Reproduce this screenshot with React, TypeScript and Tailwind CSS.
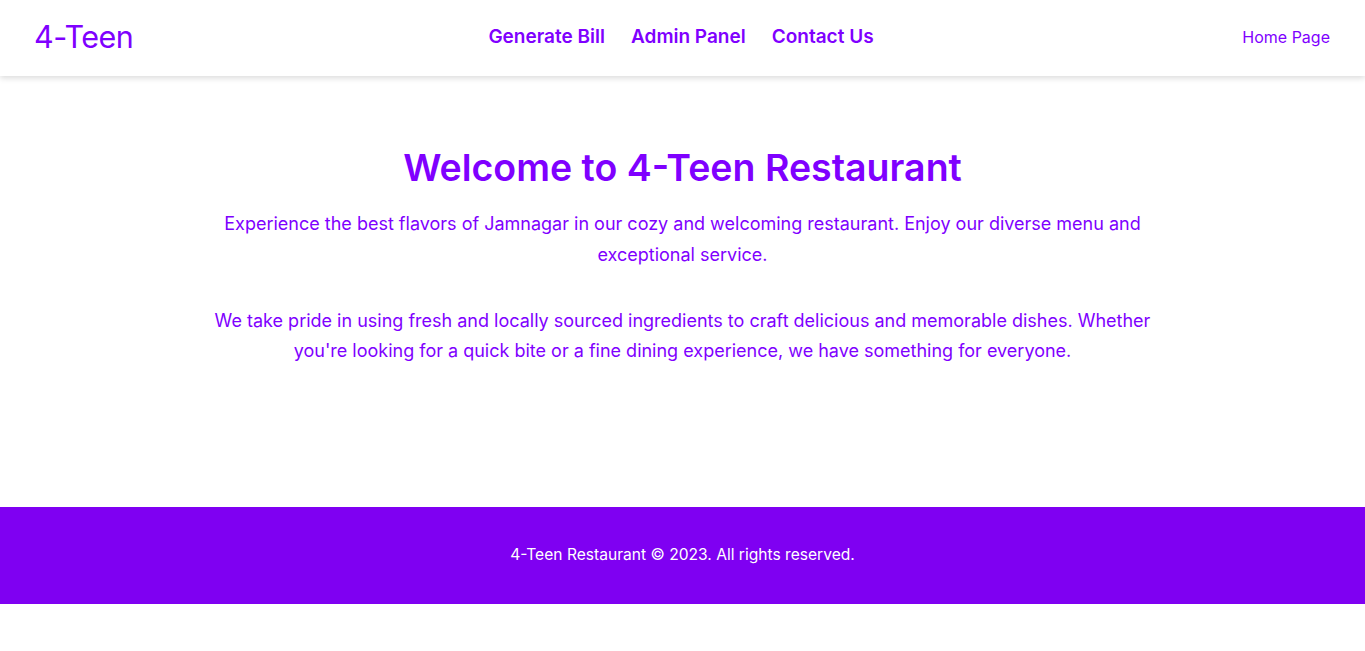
import React from 'react';

const navLinks = ['Generate Bill', 'Admin Panel', 'Contact Us'];

const App = () => {
    return (
        <div className="min-h-screen bg-white text-[#7f00ff]" style={{ fontFamily: 'Inter, "Open Sans", sans-serif' }}>
            {/* Header */}
            <header className="h-[76px] flex items-center justify-between px-[35px] bg-white shadow-[0_2px_6px_rgba(0,0,0,0.15)] relative">
                <div className="text-[30.5px] leading-none tracking-[-0.5px] w-[200px] -mt-[2px] -ml-[1px]">4-Teen</div>
                <nav className="flex items-center gap-[26px] -mt-[1px] ml-[-2px]">
                    {navLinks.map((link, index) => (
                        <a key={index} href="#" className="text-[19px] font-semibold">{link}</a>
                    ))}
                </nav>
                <div className="w-[200px] flex justify-end -mt-[2px]">
                    <a href="#" className="text-[16px]">Home Page</a>
                </div>
            </header>

            {/* Main content */}
            <main className="h-[431px] pt-[68px] text-center">
                <h1 className="text-[37.5px] font-semibold leading-[48px] mb-[16px]">Welcome to 4-Teen Restaurant</h1>
                <div className="max-w-[960px] mx-auto">
                    <p className="text-[18px] leading-[31px] mb-[36px]">
                        Experience the best flavors of Jamnagar in our cozy and welcoming restaurant. Enjoy our diverse menu and exceptional service.
                    </p>
                    <p className="text-[18px] leading-[30px]">
                        We take pride in using fresh and locally sourced ingredients to craft delicious and memorable dishes. Whether you're looking for a quick bite or a fine dining experience, we have something for everyone.
                    </p>
                </div>
            </main>

            {/* Footer */}
            <footer className="h-[97px] bg-[#7f00f2] flex items-center justify-center">
                <p className="text-white text-[15.6px] -mt-[2px]">4-Teen Restaurant © 2023. All rights reserved.</p>
            </footer>
        </div>
    );
};

export default App;
